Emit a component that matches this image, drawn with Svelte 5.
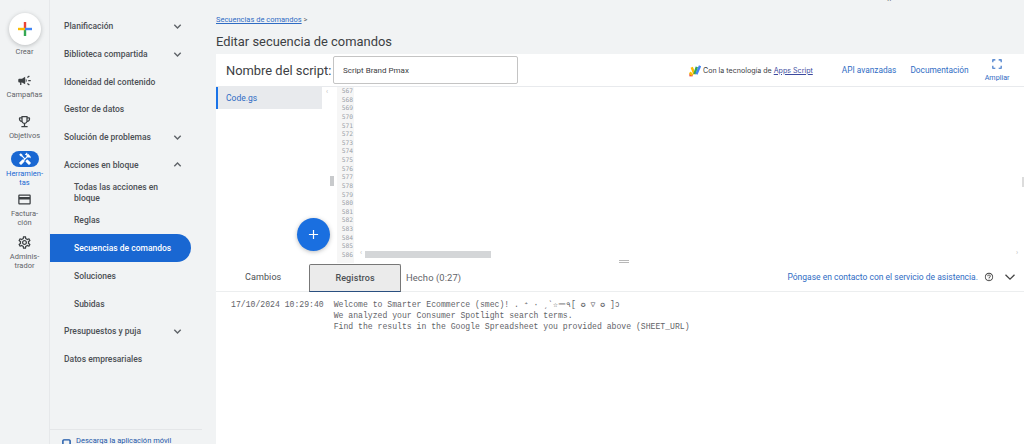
<script lang="ts">
	const topItems = [
		{ label: 'Planificación', chevron: 'down' },
		{ label: 'Biblioteca compartida', chevron: 'down' },
		{ label: 'Idoneidad del contenido' },
		{ label: 'Gestor de datos' },
		{ label: 'Solución de problemas', chevron: 'down' },
		{ label: 'Acciones en bloque', chevron: 'up' }
	];
	const subItems = ['Reglas', 'Secuencias de comandos', 'Soluciones', 'Subidas'];
	const lineNumbers = Array.from({ length: 20 }, (_, i) => 567 + i);
	const logLines = [
		'We analyzed your Consumer Spotlight search terms.',
		'Find the results in the Google Spreadsheet you provided above (SHEET_URL)'
	];
</script>

{#snippet chevron(dir)}
	<svg class="chev" class:up={dir === 'up'} viewBox="0 0 12 12" fill="none" stroke="currentColor" stroke-width="1.5">
		<path d="M2.5 4.2 L6 7.7 L9.5 4.2" />
	</svg>
{/snippet}

<div class="page">
	<aside class="rail">
		<div class="crear">
			<svg viewBox="0 0 16 16" width="16" height="16">
				<rect x="6.8" y="1" width="2.4" height="7" fill="#ea4335" />
				<rect x="6.8" y="8" width="2.4" height="7" fill="#34a853" />
				<rect x="1" y="6.8" width="7" height="2.4" fill="#fbbc04" />
				<rect x="8" y="6.8" width="7" height="2.4" fill="#4285f4" />
			</svg>
		</div>
		<span class="rail-label crear-label">Crear</span>

		<svg class="rail-icon campaign" viewBox="0 0 24 24"><path d="M18 11v2h4v-2h-4zm-2 6.61c.96.71 2.21 1.65 3.2 2.39.4-.53.8-1.07 1.2-1.6-.99-.74-2.24-1.68-3.2-2.4-.4.54-.8 1.08-1.2 1.61zM20.4 5.6c-.4-.53-.8-1.07-1.2-1.6-.99.74-2.24 1.68-3.2 2.4.4.53.8 1.07 1.2 1.6.96-.72 2.21-1.65 3.2-2.4zM4 9c-1.1 0-2 .9-2 2v2c0 1.1.9 2 2 2h1v4h2v-4h1l5 3V6L8 9H4zm11.5 3c0-1.33-.58-2.53-1.5-3.35v6.69c.92-.81 1.5-2.01 1.5-3.34z" /></svg>
		<span class="rail-label">Campañas</span>

		<svg class="rail-icon trophy" viewBox="0 0 24 24"><path d="M19 5h-2V3H7v2H5c-1.1 0-2 .9-2 2v1c0 2.55 1.92 4.63 4.39 4.94.63 1.5 1.98 2.63 3.61 2.96V19H7v2h10v-2h-4v-3.1c1.63-.33 2.98-1.46 3.61-2.96C19.08 12.63 21 10.55 21 8V7c0-1.1-.9-2-2-2zM5 8V7h2v3.82C5.84 10.4 5 9.3 5 8zm7 6c-1.65 0-3-1.35-3-3V5h6v6c0 1.65-1.35 3-3 3zm7-6c0 1.3-.84 2.4-2 2.82V7h2v1z" /></svg>
		<span class="rail-label">Objetivos</span>

		<div class="tools-pill">
			<svg viewBox="0 0 24 24" width="14" height="14"><path fill="#fff" d="M21.67 18.17l-5.3-5.3h-.99l-2.54 2.54v.99l5.3 5.3c.39.39 1.02.39 1.41 0l2.12-2.12c.39-.38.39-1.02 0-1.41z M17.34 10.19l1.41-1.41 2.12 2.12c1.17-1.17 1.17-3.07 0-4.24l-3.54-3.54-1.41 1.41V1.71l-.7-.71-3.54 3.54.71.71h2.83l-1.41 1.41 1.06 1.06-2.89 2.89-4.13-4.13V5.06L4.83 2.04 2 4.87 5.03 7.9h1.41l4.13 4.13-.85.85H7.6l-5.3 5.3c-.39.39-.39 1.02 0 1.41l2.12 2.12c.39.39 1.02.39 1.41 0l5.3-5.3v-2.12l5.15-5.15 1.06 1.05z" /></svg>
		</div>
		<span class="rail-label active">Herramien-<br />tas</span>

		<svg class="rail-icon card" viewBox="0 0 24 24"><path d="M20 4H4c-1.11 0-1.99.89-1.99 2L2 18c0 1.11.89 2 2 2h16c1.11 0 2-.89 2-2V6c0-1.11-.89-2-2-2zm0 14H4v-6h16v6zm0-10H4V6h16v2z" /></svg>
		<span class="rail-label">Factura-<br />ción</span>

		<svg class="rail-icon gear" viewBox="0 0 24 24"><path d="M19.43 12.98c.04-.32.07-.64.07-.98 0-.34-.03-.66-.07-.98l2.11-1.65c.19-.15.24-.42.12-.64l-2-3.46c-.09-.16-.26-.25-.44-.25-.06 0-.12.01-.17.03l-2.49 1c-.52-.4-1.08-.73-1.69-.98l-.38-2.65C14.46 2.18 14.25 2 14 2h-4c-.25 0-.46.18-.49.42l-.38 2.65c-.61.25-1.17.59-1.69.98l-2.49-1c-.06-.02-.12-.03-.18-.03-.17 0-.34.09-.43.25l-2 3.46c-.13.22-.07.49.12.64l2.11 1.65c-.04.32-.07.65-.07.98 0 .33.03.66.07.98l-2.11 1.65c-.19.15-.24.42-.12.64l2 3.46c.09.16.26.25.44.25.06 0 .12-.01.17-.03l2.49-1c.52.4 1.08.73 1.69.98l.38 2.65c.03.24.24.42.49.42h4c.25 0 .46-.18.49-.42l.38-2.65c.61-.25 1.17-.59 1.69-.98l2.49 1c.06.02.12.03.18.03.17 0 .34-.09.43-.25l2-3.46c.12-.22.07-.49-.12-.64l-2.11-1.65zm-1.98-1.71c.04.31.05.52.05.73 0 .21-.02.43-.05.73l-.14 1.13.89.7 1.08.84-.7 1.21-1.27-.51-1.04-.42-.9.68c-.43.32-.84.56-1.25.73l-1.06.43-.16 1.13-.2 1.35h-1.4l-.19-1.35-.16-1.13-1.06-.43c-.43-.18-.83-.41-1.23-.71l-.91-.7-1.06.43-1.27.51-.7-1.21 1.08-.84.89-.7-.14-1.13c-.03-.31-.05-.54-.05-.74s.02-.43.05-.73l.14-1.13-.89-.7-1.08-.84.7-1.21 1.27.51 1.04.42.9-.68c.43-.32.84-.56 1.25-.73l1.06-.43.16-1.13.2-1.35h1.39l.19 1.35.16 1.13 1.06.43c.43.18.83.41 1.23.71l.91.7 1.06-.43 1.27-.51.7 1.21-1.07.85-.89.7.14 1.13zM12 8c-2.21 0-4 1.79-4 4s1.79 4 4 4 4-1.79 4-4-1.79-4-4-4zm0 6c-1.1 0-2-.9-2-2s.9-2 2-2 2 .9 2 2-.9 2-2 2z" /></svg>
		<span class="rail-label">Adminis-<br />trador</span>
	</aside>

	<nav class="nav">
		<div class="nav-list">
			{#each topItems as item}
				<div class="nav-row">
					<span>{item.label}</span>
					{#if item.chevron}{@render chevron(item.chevron)}{/if}
				</div>
			{/each}
			<div class="nav-sub wrap">Todas las acciones en bloque</div>
			{#each subItems as sub}
				<div class="nav-sub" class:selected={sub === 'Secuencias de comandos'}>{sub}</div>
			{/each}
			<div class="nav-row">
				<span>Presupuestos y puja</span>
				{@render chevron('down')}
			</div>
			<div class="nav-row"><span>Datos empresariales</span></div>
		</div>
		<div class="nav-foot">
			<svg viewBox="0 0 10 10" width="9" height="9"><rect x="1" y="1" width="8" height="8" rx="1" fill="none" stroke="#1a56a8" stroke-width="1.6" /></svg>
			<span>Descarga la aplicación móvil</span>
		</div>
	</nav>

	<main class="main">
		<header class="head">
			<span class="stray">::</span>
			<div class="crumb"><a href="#top">Secuencias de comandos</a> <span>&gt;</span></div>
			<h1>Editar secuencia de comandos</h1>
		</header>

		<div class="toolbar">
			<label class="name-label" for="script-name">Nombre del script:</label>
			<input id="script-name" class="name-input" value="Script Brand Pmax" />
			<div class="powered">
				<svg viewBox="0 0 14 14" width="13" height="13" fill="none" stroke-width="2.6">
					<path d="M1.5 12 L5 12" stroke="#ea4335" />
					<path d="M2 9 L4.5 12" stroke="#fbbc04" />
					<path d="M4 3.5 L7 11" stroke="#fbbc04" />
					<path d="M7 11 L9.5 3" stroke="#34a853" />
					<path d="M9 11 L13 2" stroke="#4285f4" />
				</svg>
				<span>Con la tecnología de <a href="#top">Apps Script</a></span>
			</div>
			<a class="tool-link api" href="#top">API avanzadas</a>
			<a class="tool-link docs" href="#top">Documentación</a>
			<div class="expand">
				<svg viewBox="0 0 12 12" width="10" height="10" fill="none" stroke="#2f6cc4" stroke-width="1.3">
					<path d="M1 4 V1 H4 M8 1 H11 V4 M11 8 V11 H8 M4 11 H1 V8" />
				</svg>
				<span>Ampliar</span>
			</div>
		</div>

		<div class="editor">
			<div class="files">
				<div class="file-tab">Code.gs</div>
			</div>
			<div class="tree-bar">
				<span class="arrow top">‹</span>
				<span class="thumb-v"></span>
			</div>
			<div class="gutter">
				{#each lineNumbers as n}
					<div>{n}</div>
				{/each}
			</div>
			<div class="code">
				<span class="arrow left">‹</span>
				<span class="thumb-h"></span>
				<span class="arrow right">›</span>
				<span class="thumb-edge"></span>
			</div>
			<button class="fab" type="button" aria-label="Añadir">
				<svg viewBox="0 0 12 12" width="11" height="11" stroke="#fff" stroke-width="1.3"><path d="M6 1 V11 M1 6 H11" /></svg>
			</button>
			<span class="splitter"></span>
		</div>

		<div class="tabs">
			<span class="tab">Cambios</span>
			<span class="tab current">Registros</span>
			<span class="status">Hecho (0:27)</span>
			<a class="support" href="#top">Póngase en contacto con el servicio de asistencia.</a>
			<svg class="help" viewBox="0 0 24 24" width="10" height="10"><path fill="#444" d="M11 18h2v-2h-2v2zm1-16C6.48 2 2 6.48 2 12s4.48 10 10 10 10-4.48 10-10S17.52 2 12 2zm0 18c-4.41 0-8-3.59-8-8s3.59-8 8-8 8 3.59 8 8-3.59 8-8 8zm0-14c-2.21 0-4 1.79-4 4h2c0-1.1.9-2 2-2s2 .9 2 2c0 2-3 1.75-3 5h2c0-2.25 3-2.5 3-5 0-2.21-1.79-4-4-4z" /></svg>
			<svg class="collapse" viewBox="0 0 12 12" width="12" height="12" fill="none" stroke="#444" stroke-width="1.3"><path d="M1.5 3.8 L6 8.2 L10.5 3.8" /></svg>
		</div>

		<div class="log">
			<span class="stamp">17/10/2024 10:29:40</span>
			<div class="messages">
				<div>Welcome to Smarter Ecommerce (smec)! . ⁺ · ˏˋ☆ー٩[ ✪ ▽ ✪ ]ↄ</div>
				{#each logLines as line}
					<div>{line}</div>
				{/each}
			</div>
		</div>
	</main>
</div>

<style>
	:global(body) {
		margin: 0;
	}
	.page {
		display: flex;
		width: 1024px;
		height: 444px;
		overflow: hidden;
		background: #f1f3f4;
		font-family: Roboto, 'Liberation Sans', sans-serif;
		color: #3c4043;
	}

	/* left rail */
	.rail {
		width: 50px;
		flex: none;
		box-sizing: border-box;
		padding-top: 13px;
		display: flex;
		flex-direction: column;
		align-items: center;
		border-right: 1px solid #e6e8ea;
	}
	.crear {
		width: 32px;
		height: 32px;
		border-radius: 50%;
		background: #fff;
		box-shadow: 0 1px 4px rgba(60, 64, 67, 0.3);
		display: flex;
		align-items: center;
		justify-content: center;
	}
	.rail-label {
		font-size: 7.5px;
		line-height: 9px;
		text-align: center;
		color: #5f6368;
	}
	.rail-label.active {
		color: #1967d2;
	}
	.crear-label {
		margin-top: 2px;
	}
	.rail-icon {
		width: 15px;
		height: 15px;
		fill: #3c4043;
		margin-bottom: 2px;
	}
	.campaign {
		margin-top: 17px;
	}
	.trophy {
		margin-top: 15px;
	}
	.tools-pill {
		width: 28px;
		height: 16px;
		margin-top: 11px;
		margin-bottom: 2px;
		border-radius: 8px;
		background: #1967d2;
		display: flex;
		align-items: center;
		justify-content: center;
	}
	.card {
		margin-top: 5px;
	}
	.gear {
		margin-top: 8px;
	}

	/* second level nav */
	.nav {
		width: 166px;
		flex: none;
		display: flex;
		flex-direction: column;
	}
	.nav-list {
		flex: 1;
		padding-top: 12.5px;
	}
	.nav-row {
		height: 27.7px;
		display: flex;
		align-items: center;
		justify-content: space-between;
		width: 119px;
		margin-left: 14px;
		font-size: 8.5px;
		font-weight: 500;
		color: #4c5054;
	}
	.chev {
		width: 11px;
		height: 11px;
		color: #5f6368;
	}
	.chev.up {
		transform: rotate(180deg);
	}
	.nav-sub {
		height: 27.7px;
		display: flex;
		align-items: center;
		padding-left: 24px;
		width: 117px;
		font-size: 8.5px;
		font-weight: 500;
		color: #4c5054;
	}
	.nav-sub.wrap {
		display: block;
		width: 95px;
		height: auto;
		line-height: 11.5px;
		margin-top: 3px;
		margin-bottom: 2px;
	}
	.nav-sub.selected {
		background: #1967d2;
		color: #fff;
		border-radius: 0 14px 14px 0;
	}
	.nav-foot {
		height: 14px;
		width: 140px;
		margin-right: 14px;
		border-top: 1px solid #e4e6e8;
		padding-left: 12px;
		display: flex;
		align-items: flex-start;
		gap: 5px;
		font-size: 7.5px;
		line-height: 22px;
		color: #1a56a8;
	}
	.nav-foot svg {
		flex: none;
		margin-top: 9px;
	}

	/* main column */
	.main {
		flex: 1;
		min-width: 0;
		display: flex;
		flex-direction: column;
		position: relative;
	}
	.head {
		height: 54px;
		flex: none;
		box-sizing: border-box;
		padding-top: 15px;
		position: relative;
	}
	.stray {
		position: absolute;
		left: 671px;
		top: -7px;
		font-size: 9px;
		color: #5f6368;
	}
	.crumb {
		font-size: 7.5px;
		line-height: 10px;
		color: #5f6368;
	}
	.crumb a {
		color: #2f6cc4;
	}
	h1 {
		margin: 8px 0 0;
		font-size: 12.9px;
		line-height: 18px;
		font-weight: 400;
		color: #3c4043;
	}

	.toolbar {
		height: 33px;
		flex: none;
		box-sizing: border-box;
		background: #fff;
		border-bottom: 1px solid #e8eaed;
		display: flex;
		align-items: center;
		padding-left: 10px;
	}
	.name-label {
		font-size: 12.9px;
		color: #3c4043;
		width: 107px;
		flex: none;
		white-space: nowrap;
	}
	.name-input {
		width: 185px;
		flex: none;
		height: 28px;
		box-sizing: border-box;
		border: 1px solid #c4c4c4;
		border-radius: 2px;
		padding: 0 9px;
		font-family: Roboto, sans-serif;
		font-size: 8px;
		color: #3c4043;
		outline: none;
	}
	.powered {
		margin-left: 170px;
		display: flex;
		align-items: center;
		gap: 2px;
		font-family: Inter, sans-serif;
		font-size: 7.1px;
		color: #3c4043;
		white-space: nowrap;
	}
	.powered a {
		color: #3c4a9e;
	}
	.tool-link {
		font-size: 8.3px;
		color: #2f6cc4;
		text-decoration: none;
		white-space: nowrap;
	}
	.api {
		margin-left: 29px;
	}
	.docs {
		margin-left: 14px;
	}
	.expand {
		margin-left: 16px;
		display: flex;
		flex-direction: column;
		align-items: center;
		gap: 4px;
		font-size: 7.2px;
		color: #2f6cc4;
	}

	.editor {
		height: 176px;
		flex: none;
		display: flex;
		background: #fff;
		position: relative;
	}
	.files {
		width: 106px;
		flex: none;
	}
	.file-tab {
		height: 22px;
		box-sizing: border-box;
		border-left: 2px solid #1a73e8;
		background: #e8eaed;
		padding-left: 8px;
		font-size: 8.5px;
		line-height: 22px;
		color: #2f6cc4;
	}
	.tree-bar {
		width: 15px;
		flex: none;
		position: relative;
	}
	.thumb-v {
		position: absolute;
		left: 8px;
		top: 89px;
		width: 4px;
		height: 10px;
		background: #c8cacc;
	}
	.arrow {
		position: absolute;
		font-size: 7px;
		line-height: 8px;
		color: #bdbdbd;
	}
	.arrow.top {
		left: 4px;
		top: 1px;
	}
	.gutter {
		width: 17px;
		flex: none;
		box-sizing: border-box;
		background: #f6f6f6;
		font-family: 'DejaVu Sans Mono', monospace;
		font-size: 6.3px;
		line-height: 8.63px;
		text-align: right;
		color: #9aa0a6;
		padding-right: 1px;
	}
	.code {
		flex: 1;
		position: relative;
	}
	.arrow.left {
		left: 6px;
		bottom: 6px;
	}
	.arrow.right {
		right: 6px;
		bottom: 6px;
	}
	.thumb-h {
		position: absolute;
		left: 11px;
		bottom: 5px;
		width: 126px;
		height: 7px;
		background: #d4d6d8;
	}
	.thumb-edge {
		position: absolute;
		right: 0;
		top: 90px;
		width: 2px;
		height: 10px;
		background: #dcdcdc;
	}
	.fab {
		position: absolute;
		left: 81px;
		top: 131px;
		width: 33px;
		height: 33px;
		padding: 0;
		border: none;
		border-radius: 50%;
		background: #1a6fe0;
		box-shadow: 0 1px 4px rgba(60, 64, 67, 0.35);
		display: flex;
		align-items: center;
		justify-content: center;
	}
	.splitter {
		position: absolute;
		left: 403px;
		bottom: 0;
		width: 10px;
		height: 3px;
		border-top: 1px solid #b8b8b8;
		border-bottom: 1px solid #b8b8b8;
		box-sizing: border-box;
	}

	.tabs {
		height: 29px;
		flex: none;
		background: #fff;
		box-sizing: border-box;
		border-bottom: 1px solid #eceeef;
		display: flex;
		align-items: center;
		position: relative;
	}
	.tab {
		font-size: 9px;
		letter-spacing: 0.1px;
		color: #4c5054;
		margin-left: 29px;
		width: 35px;
	}
	.tab.current {
		margin-left: 29px;
		width: 92px;
		height: 28px;
		box-sizing: border-box;
		margin-top: 2px;
		border: 1px solid #777;
		border-bottom: 1px solid #2a4f80;
		border-radius: 2px 2px 0 0;
		background: #ebebeb;
		text-align: center;
		line-height: 26px;
		font-weight: 500;
	}
	.status {
		margin-left: 5px;
		font-size: 9.4px;
		letter-spacing: 0.1px;
		color: #5f6368;
	}
	.support {
		margin-left: auto;
		font-size: 8.5px;
		color: #2f6cc4;
		text-decoration: none;
	}
	.help {
		margin-left: 6px;
	}
	.collapse {
		margin: 0 8px 0 10px;
	}

	.log {
		flex: 1;
		background: #fff;
		display: flex;
		padding: 7px 0 0 15px;
		font-family: 'Liberation Mono', monospace;
		font-size: 8.15px;
		line-height: 11px;
		color: #5f6368;
	}
	.stamp {
		white-space: pre;
	}
	.messages {
		margin-left: 10px;
	}
	.messages div {
		height: 11px;
		white-space: pre;
	}
</style>
